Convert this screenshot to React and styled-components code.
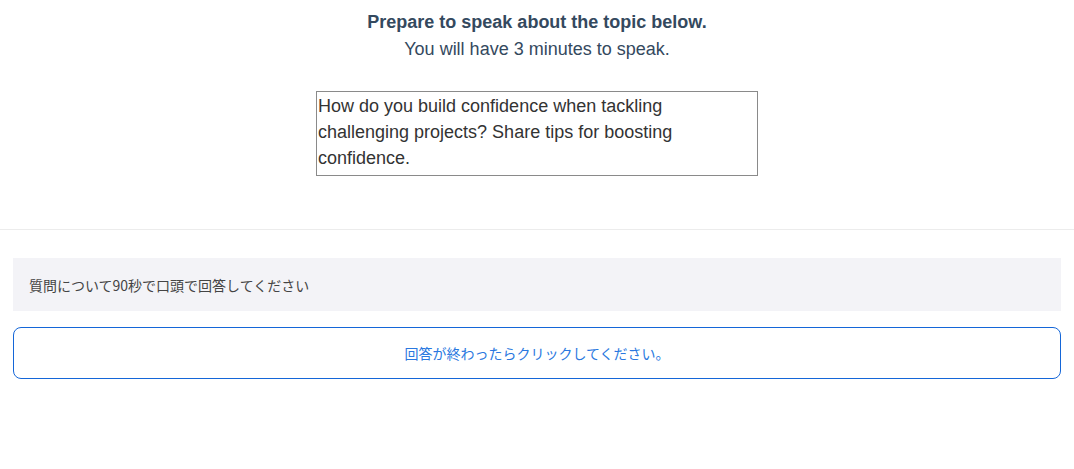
import React from 'react'
import styled, { createGlobalStyle } from 'styled-components'

const Global = createGlobalStyle`
body {
  margin: 0;
  background: #fff;
  font-family: "Liberation Sans", Arial, "Noto Sans CJK JP", sans-serif;
}
`

const Page = styled.div`
width: 1074px;
`

const Prompt = styled.section`
display: flex;
flex-direction: column;
align-items: center;
padding-top: 9px;
padding-bottom: 53px;
border-bottom: 1px solid #ececec;
`

const Title = styled.h1`
margin: 0;
font-size: 18px;
line-height: 26px;
font-weight: 700;
color: #34495e;
`

const Subtitle = styled.p`
margin: 1px 0 0;
font-size: 18px;
line-height: 26px;
color: #34495e;
`

const Topic = styled.div`
box-sizing: border-box;
width: 442px;
height: 85px;
margin-top: 29px;
padding: 1px 0 0 1px;
border: 1px solid #8a8a8a;
font-size: 18px;
line-height: 26px;
color: #333;
`

const Answer = styled.section`
display: flex;
flex-direction: column;
gap: 16px;
padding: 28px 13px 0;
`

const Notice = styled.div`
box-sizing: border-box;
height: 53px;
display: flex;
align-items: center;
padding: 0 16px;
background: #f3f3f7;
font-family: "Noto Sans CJK JP", sans-serif;
font-size: 14px;
color: #444;
`

const DoneButton = styled.button`
box-sizing: border-box;
height: 52px;
width: 100%;
border: 1px solid #1466d8;
border-radius: 8px;
background: #fff;
font-family: "Noto Sans CJK JP", sans-serif;
font-size: 14px;
color: #2a78e0;
cursor: pointer;
`

export default function App() {
    return (
        <Page>
            <Global />
            <Prompt>
                <Title>Prepare to speak about the topic below.</Title>
                <Subtitle>You will have 3 minutes to speak.</Subtitle>
                <Topic>
                    How do you build confidence when tackling challenging projects? Share tips for boosting confidence.
                </Topic>
            </Prompt>
            <Answer>
                <Notice>質問について90秒で口頭で回答してください</Notice>
                <DoneButton>回答が終わったらクリックしてください。</DoneButton>
            </Answer>
        </Page>
    )
}
